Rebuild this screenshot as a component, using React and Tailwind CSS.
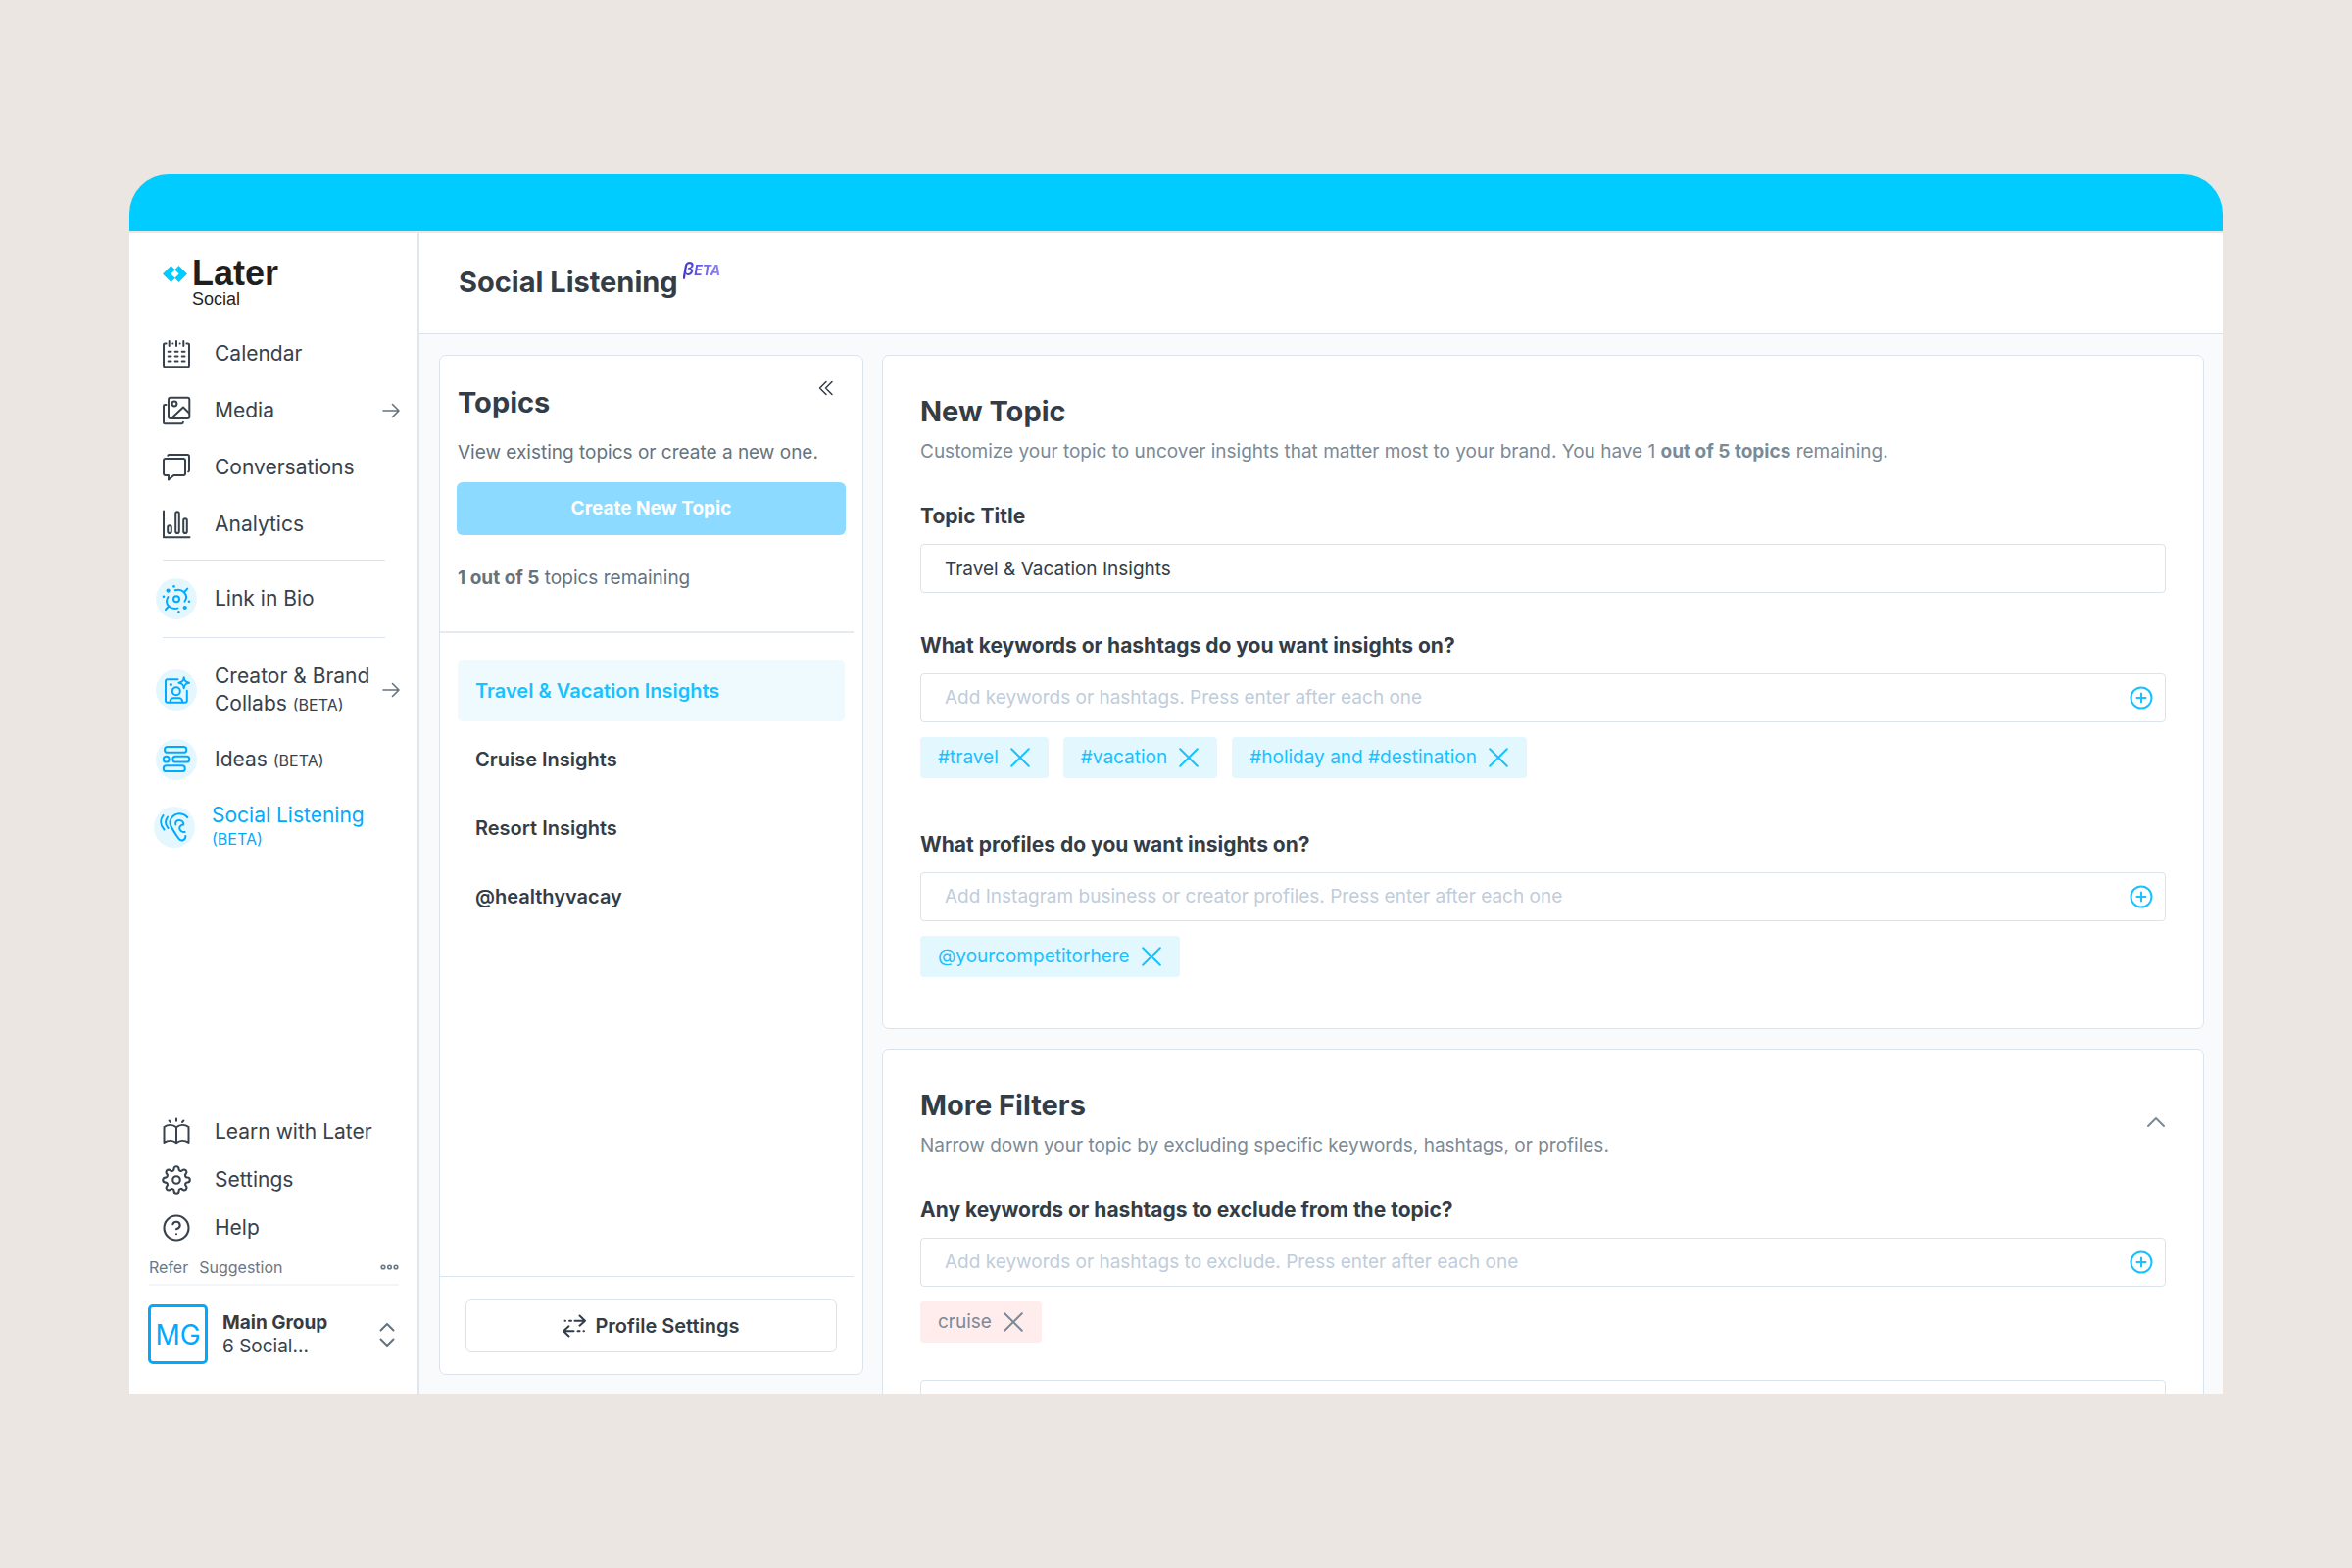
import React, { useState } from "react";
import { FiSettings, FiHelpCircle } from "react-icons/fi";

// All the line icons share the same 30px canvas
const Icon = ({ children }) => (
  <svg
    viewBox="0 0 30 30"
    className="h-[30px] w-[30px] shrink-0"
    fill="none"
    stroke="currentColor"
    strokeWidth="2"
    strokeLinecap="round"
    strokeLinejoin="round"
    aria-hidden="true"
  >
    {children}
  </svg>
);

const CalendarIcon = () => (
  <Icon>
    <path d="M4.6 4.6H3.2A1.2 1.2 0 0 0 2 5.8v21.3a1.2 1.2 0 0 0 1.2 1.2h23.6a1.2 1.2 0 0 0 1.2-1.2V5.8a1.2 1.2 0 0 0-1.2-1.2h-1.4" />
    <path d="M7.7 2v5M15 2v5M22.3 2v5M11.3 4.6h.1M18.6 4.6h.1" />
    <path d="M6.7 12.7h2.8M13.7 12.7h2.8M20.7 12.7h2.8M6.7 17.6h2.8M13.7 17.6h2.8M20.7 17.6h2.8M6.7 22.4h2.8M13.7 22.4h2.8M20.7 22.4h2.8" />
  </Icon>
);

const MediaIcon = () => (
  <Icon>
    <rect x="7" y="1.7" width="21.3" height="21.3" rx="2" />
    <circle cx="13" cy="8" r="2.4" />
    <path d="M10 22.7 22 11.5l6 6" />
    <path d="M4.5 9H3.2A1.2 1.2 0 0 0 2 10.2V27a1.2 1.2 0 0 0 1.2 1.2h17.3a1.4 1.4 0 0 0 1.4-1.4" />
  </Icon>
);

const ConversationsIcon = () => (
  <Icon>
    <path d="M3.7 6h18.6A1.7 1.7 0 0 1 24 7.7v13.6a1.7 1.7 0 0 1-1.7 1.7h-10L7 27.5V23H3.7A1.7 1.7 0 0 1 2 21.3V7.7A1.7 1.7 0 0 1 3.7 6Z" />
    <path d="M6.3 2.8A1.4 1.4 0 0 1 7.6 2h18.9A1.5 1.5 0 0 1 28 3.5V18a1.5 1.5 0 0 1-.8 1.3" />
  </Icon>
);

const AnalyticsIcon = () => (
  <Icon>
    <path d="M2 1.5v26.8h26.5" />
    <rect x="6.2" y="16.2" width="3.6" height="7.8" rx="1.8" />
    <rect x="14.2" y="2.2" width="3.6" height="21.8" rx="1.8" />
    <rect x="22.2" y="9.3" width="3.6" height="14.7" rx="1.8" />
  </Icon>
);

const LinkInBioIcon = () => (
  <Icon>
    <circle cx="15" cy="15.3" r="3" />
    <path d="M13.8 6.2C17.5 5.3 20.5 6 22.8 8.2 25.5 11 25.7 14.5 23.5 17.6M22.8 8.2 26.3 4.6" />
    <path d="M16.5 24.6C12.8 25.5 9.5 24.8 7.2 22.5 4.6 19.8 4.5 16.2 6.5 13M7.2 22.5 3.9 26" />
    <g fill="currentColor" stroke="none">
      <circle cx="6.6" cy="6.6" r="2.1" />
      <circle cx="23.7" cy="24" r="2.1" />
      <circle cx="12.5" cy="2.4" r="1.3" />
      <circle cx="2" cy="12.7" r="1.3" />
      <circle cx="28" cy="17.8" r="1.3" />
      <circle cx="17.4" cy="28.4" r="1.3" />
    </g>
  </Icon>
);

const CreatorIcon = () => (
  <Icon>
    <path d="M16.5 4.3H5.8A1.8 1.8 0 0 0 4 6.1V26a1.8 1.8 0 0 0 1.8 1.8H24a1.8 1.8 0 0 0 1.8-1.8V15.7" />
    <path d="M22.7 2.3C23.2 5.8 24.3 7 28 7.7 24.3 8.4 23.2 9.6 22.7 13.2 22.2 9.6 21.1 8.4 17.4 7.7 21.1 7 22.2 5.8 22.7 2.3Z" />
    <circle cx="14.8" cy="16.3" r="4" />
    <path d="M8.7 27.5v-1a3.2 3.2 0 0 1 3.2-3.2h5.9a3.2 3.2 0 0 1 3.2 3.2v1" />
    <circle cx="9.4" cy="9.4" r="1.5" fill="currentColor" stroke="none" />
  </Icon>
);

const IdeasIcon = () => (
  <Icon>
    <rect x="3" y="2" width="22.3" height="5.8" rx="2.9" />
    <circle cx="4.7" cy="14.7" r="2.9" />
    <rect x="11.3" y="11.8" width="17" height="5.8" rx="2.9" />
    <rect x="1.8" y="21.3" width="22" height="5.8" rx="2.9" />
  </Icon>
);

const ListeningIcon = () => (
  <Icon>
    <path d="M28.3 5C25 1.2 19.5.1 15.2 2.7 11 5.3 9.5 9.7 11.2 13.5 12.5 16.6 16.5 22.5 18.7 25.8 20.3 28.3 22.7 29 24.6 27.8 26 26.9 26.5 25.6 26.3 24" />
    <path d="M16.3 12.5C15.5 9.5 17.7 7.8 20 7.9 22.8 8 24.8 10.2 24.3 12.6 22.3 12.4 20.3 13.9 20.2 16 20.2 18.3 22.5 20.3 25.6 20" />
    <path d="M3.5 3C.3 7.3.4 13 4.5 17.5M8.1 4.5C5.5 8 5.5 12.5 8.6 16" />
  </Icon>
);

const LearnIcon = () => (
  <Icon>
    <path d="M15 10.3C11.5 7.5 6.5 7.2 2.5 10V26C6.5 23.3 11.5 23.5 15 26.2 18.5 23.5 23.5 23.3 27.5 26V10C23.5 7.2 18.5 7.5 15 10.3ZV26" />
    <path d="M15 1.6v2.2M7.6 3.5 9 5M22.4 3.5 21 5" />
  </Icon>
);

const ArrowRight = () => (
  <svg
    viewBox="0 0 18 16"
    className="h-4 w-[18px] shrink-0 text-[#65737e]"
    fill="none"
    stroke="currentColor"
    strokeWidth="1.6"
    strokeLinecap="round"
    strokeLinejoin="round"
    aria-hidden="true"
  >
    <path d="M1 8H17M10.5 1.5 17 8l-6.5 6.5" />
  </svg>
);

const PlusCircle = () => (
  <svg
    viewBox="0 0 24 24"
    className="h-6 w-6"
    fill="none"
    stroke="currentColor"
    strokeWidth="2"
    strokeLinecap="round"
    aria-hidden="true"
  >
    <circle cx="12" cy="12" r="10.5" />
    <path d="M12 7.5v9M7.5 12h9" />
  </svg>
);

const mainLinks = [
  { label: "Calendar", icon: <CalendarIcon /> },
  { label: "Media", icon: <MediaIcon />, arrow: true },
  { label: "Conversations", icon: <ConversationsIcon /> },
  { label: "Analytics", icon: <AnalyticsIcon /> },
];

const footerLinks = [
  { label: "Learn with Later", icon: <LearnIcon /> },
  {
    label: "Settings",
    icon: <FiSettings className="h-[30px] w-[30px]" strokeWidth={1.7} />,
  },
  {
    label: "Help",
    icon: <FiHelpCircle className="h-[30px] w-[30px]" strokeWidth={1.7} />,
  },
];

const topics = [
  "Travel & Vacation Insights",
  "Cruise Insights",
  "Resort Insights",
  "@healthyvacay",
];

const Logo = () => (
  <a href="#home" className="flex items-start gap-[5px] pl-[34px]">
    <svg viewBox="0 0 25 17" className="mt-[9px] h-[17px] w-[25px]" aria-hidden="true">
      <path
        fill="#00ccff"
        fillRule="evenodd"
        d="M8.5 0 12.5 4 16.5 0 25 8.5 16.5 17 12.5 13 8.5 17 0 8.5ZM12.5 4.4 8.4 8.5 12.5 12.6 16.6 8.5Z"
      />
    </svg>
    <span className="flex flex-col font-['Liberation_Sans',Arial,sans-serif] text-[#1f1f1f]">
      <span className="text-[36px] leading-[34px] font-bold">Later</span>
      <span className="text-[18px] leading-[18px]">Social</span>
    </span>
  </a>
);

const NavBubble = ({ children }) => (
  <span className="flex h-[42px] w-[42px] shrink-0 items-center justify-center rounded-full bg-[#e4f7ff] text-[#00aaff]">
    {children}
  </span>
);

const Sidebar = () => (
  <aside className="flex w-[296px] shrink-0 flex-col border-r-2 border-[#e0e6ee] bg-white pt-[24px] text-[21px] text-[#38424c]">
    <Logo />
    <nav className="mt-[18px] flex flex-col">
      {mainLinks.map((link) => (
        <a
          key={link.label}
          href="#nav"
          className="flex h-[58px] items-center gap-[24px] pr-[18px] pl-[33px]"
        >
          {link.icon}
          <span className="flex-1">{link.label}</span>
          {link.arrow && <ArrowRight />}
        </a>
      ))}
      <hr className="mt-[7px] mr-[33px] ml-[34px] border-[#dbe3ef]" />
      <a href="#bio" className="flex h-[78px] items-center gap-[18px] pl-[27px]">
        <NavBubble>
          <LinkInBioIcon />
        </NavBubble>
        Link in Bio
      </a>
      <hr className="mr-[33px] ml-[34px] border-[#dbe3ef]" />
      <a
        href="#collabs"
        className="mt-[25px] flex items-center justify-between pr-[18px] pl-[27px] leading-[28px]"
      >
        <span className="flex items-center gap-[18px]">
          <NavBubble>
            <CreatorIcon />
          </NavBubble>
          <span className="whitespace-nowrap">
            Creator &amp; Brand
            <br />
            Collabs <span className="text-[16px] leading-none">(BETA)</span>
          </span>
        </span>
        <ArrowRight />
      </a>
      <a href="#ideas" className="mt-[22px] flex items-center gap-[18px] pl-[27px]">
        <NavBubble>
          <IdeasIcon />
        </NavBubble>
        <span>
          Ideas <span className="text-[16px] leading-none">(BETA)</span>
        </span>
      </a>
      <a
        href="#listening"
        className="mt-[23px] flex items-center gap-[17px] pl-[25px] leading-[25px] text-[#00aaff]"
      >
        <NavBubble>
          <ListeningIcon />
        </NavBubble>
        <span className="whitespace-nowrap">
          <span className="block">Social Listening</span>
          <span className="block text-[16px]">(BETA)</span>
        </span>
      </a>
    </nav>

    <div className="mt-auto flex flex-col">
      {footerLinks.map((link) => (
        <a
          key={link.label}
          href="#footer"
          className="flex h-[49px] items-center gap-[24px] pl-[33px]"
        >
          {link.icon}
          {link.label}
        </a>
      ))}
      <div className="mr-[19px] ml-[20px] flex items-center gap-[11px] border-b-2 border-[#f3f5f7] pt-[3px] pb-[4px] text-[16px] leading-[26px] text-[#6b7883]">
        <a href="#refer">Refer</a>
        <a href="#suggestion">Suggestion</a>
        <button type="button" aria-label="More options" className="ml-auto">
          <svg
            viewBox="0 0 19 6"
            className="h-[6px] w-[19px]"
            fill="none"
            stroke="currentColor"
            strokeWidth="1.6"
          >
            <circle cx="3" cy="3" r="1.8" />
            <circle cx="9.5" cy="3" r="1.8" />
            <circle cx="16" cy="3" r="1.8" />
          </svg>
        </button>
      </div>
      <button
        type="button"
        className="mt-[19px] mr-[23px] mb-[30px] ml-[19px] flex items-center gap-[15px] text-left"
      >
        <span className="flex h-[61px] w-[61px] shrink-0 items-center justify-center rounded-[5px] border-3 border-[#00aaff] text-[28px] text-[#00aaff]">
          MG
        </span>
        <span className="flex-1 text-[19px] leading-[24px]">
          <span className="block font-bold text-[#333d47]">Main Group</span>
          <span className="block">6 Social...</span>
        </span>
        <svg
          viewBox="0 0 16 26"
          className="h-[26px] w-4 text-[#65737e]"
          fill="none"
          stroke="currentColor"
          strokeWidth="2"
          strokeLinecap="round"
          strokeLinejoin="round"
          aria-hidden="true"
        >
          <path d="M1.5 8.5 8 2l6.5 6.5M1.5 17.5 8 24l6.5-6.5" />
        </svg>
      </button>
    </div>
  </aside>
);

const TopicsPanel = () => {
  const [activeTopic, setActiveTopic] = useState(topics[0]);

  return (
    <section className="flex w-[433px] shrink-0 flex-col rounded-[7px] border border-[#dbe3ec] bg-white">
      <div className="flex items-start justify-between pr-[29px] pl-[18px]">
        <h2 className="pt-[31px] text-[29px] leading-[34px] font-bold">Topics</h2>
        <button type="button" aria-label="Collapse topics" className="pt-[25px]">
          <svg
            viewBox="0 0 16 16"
            className="h-4 w-4"
            fill="none"
            stroke="currentColor"
            strokeWidth="1.5"
            strokeLinecap="round"
            strokeLinejoin="round"
          >
            <path d="M8 1.5 1.5 8 8 14.5M14 1.5 7.5 8 14 14.5" />
          </svg>
        </button>
      </div>
      <p className="mt-[20px] pl-[18px] text-[19px] leading-[28px] text-[#65737e]">
        View existing topics or create a new one.
      </p>
      <button
        type="button"
        className="mx-[17px] mt-[16px] h-[54px] rounded-[6px] bg-[#8cdaff] text-[19px] font-bold text-white"
      >
        Create New Topic
      </button>
      <p className="mt-[30px] pl-[18px] text-[19px] leading-[28px] text-[#65737e]">
        <b className="font-bold">1 out of 5</b> topics remaining
      </p>
      <hr className="mt-[40px] mr-[9px] border-t-2 border-[#e4eaf0]" />
      <ul className="mt-[27px] flex flex-col gap-[7px] px-[18px]">
        {topics.map((topic) => (
          <li key={topic}>
            <button
              type="button"
              onClick={() => setActiveTopic(topic)}
              className={`h-[63px] w-full rounded-[5px] pl-[18px] text-left text-[20px] font-semibold ${
                topic === activeTopic ? "bg-[#effaff] text-[#17c2ff]" : ""
              }`}
            >
              {topic}
            </button>
          </li>
        ))}
      </ul>
      <hr className="mt-auto mr-[9px] border-[#dbe3ec]" />
      <button
        type="button"
        className="mx-[26px] mt-[23px] mb-[22px] flex h-[54px] items-center justify-center gap-[9px] rounded-[6px] border border-[#dbe3ec] text-[20px] font-semibold"
      >
        <svg
          viewBox="0 0 24 24"
          className="h-6 w-6"
          fill="none"
          stroke="currentColor"
          strokeWidth="2"
          strokeLinecap="round"
          strokeLinejoin="round"
          aria-hidden="true"
        >
          <path d="M12.5 6.7H23M17.5 1.5 23 6.7l-5.5 5M7 6.7h2M2.5 6.7h.5" />
          <path d="M11.5 17.3H1M6.500 12.3 1 17.3l5.5 5.2M15.5 17.3h2M21.5 17.3h.5" />
        </svg>
        Profile Settings
      </button>
    </section>
  );
};

const Chip = ({ label, excluded, onRemove }) => (
  <li
    className={`flex h-[42px] items-center gap-[12px] rounded-[4px] pr-[19px] pl-[18px] text-[19px] ${
      excluded ? "bg-[#ffecec] text-[#7c8a96]" : "bg-[#e3f7ff] text-[#17c2ff]"
    }`}
  >
    {label}
    <button type="button" aria-label={`Remove ${label}`} onClick={onRemove}>
      <svg
        viewBox="0 0 20 20"
        className="h-5 w-5"
        fill="none"
        stroke="currentColor"
        strokeWidth="2"
        strokeLinecap="round"
      >
        <path d="M1.2 1.2 18.8 18.8M18.8 1.2 1.2 18.8" />
      </svg>
    </button>
  </li>
);

const TagField = ({ id, label, placeholder, initialTags, excluded }) => {
  const [tags, setTags] = useState(initialTags);
  const [value, setValue] = useState("");

  const addTag = (e) => {
    e.preventDefault();
    if (!value.trim()) return;
    setTags([...tags, value.trim()]);
    setValue("");
  };

  return (
    <form onSubmit={addTag} className="flex flex-col">
      <label htmlFor={id} className="text-[21px] leading-[28px] font-bold">
        {label}
      </label>
      <div className="mt-[14px] flex h-[50px] items-center rounded-[4px] border border-[#dbe3ec] pr-[12px] pl-[24px]">
        <input
          id={id}
          type="text"
          value={value}
          onChange={(e) => setValue(e.target.value)}
          placeholder={placeholder}
          className="min-w-0 flex-1 text-[19px] outline-none placeholder:text-[#bfcddb]"
        />
        <button type="submit" aria-label="Add" className="text-[#17c2ff]">
          <PlusCircle />
        </button>
      </div>
      <ul className="mt-[15px] flex flex-wrap gap-[15px]">
        {tags.map((tag) => (
          <Chip
            key={tag}
            label={tag}
            excluded={excluded}
            onRemove={() => setTags(tags.filter((t) => t !== tag))}
          />
        ))}
      </ul>
    </form>
  );
};

const NewTopicCard = () => (
  <section className="shrink-0 rounded-[7px] border border-[#dbe3ec] bg-white px-[38px] pt-[40px] pb-[52px]">
    <h2 className="text-[29px] leading-[34px] font-bold">New Topic</h2>
    <p className="mt-[10px] text-[19px] leading-[28px] text-[#7c8a96]">
      Customize your topic to uncover insights that matter most to your brand. You have 1{" "}
      <b className="font-bold">out of 5 topics</b> remaining.
    </p>
    <div className="mt-[38px] flex flex-col">
      <label htmlFor="topic-title" className="text-[21px] leading-[28px] font-bold">
        Topic Title
      </label>
      <input
        id="topic-title"
        type="text"
        defaultValue="Travel & Vacation Insights"
        className="mt-[14px] h-[50px] rounded-[4px] border border-[#dbe3ec] px-[24px] text-[19px] outline-none"
      />
    </div>
    <div className="mt-[40px] flex flex-col gap-[54px]">
      <TagField
        id="keywords"
        label="What keywords or hashtags do you want insights on?"
        placeholder="Add keywords or hashtags. Press enter after each one"
        initialTags={["#travel", "#vacation", "#holiday and #destination"]}
      />
      <TagField
        id="profiles"
        label="What profiles do you want insights on?"
        placeholder="Add Instagram business or creator profiles. Press enter after each one"
        initialTags={["@yourcompetitorhere"]}
      />
    </div>
  </section>
);

const MoreFiltersCard = () => (
  <section className="shrink-0 rounded-[7px] border border-[#dbe3ec] bg-white px-[38px] pt-[40px] pb-[52px]">
    <div className="flex items-center justify-between">
      <div>
        <h2 className="text-[29px] leading-[34px] font-bold">More Filters</h2>
        <p className="mt-[10px] text-[19px] leading-[28px] text-[#7c8a96]">
          Narrow down your topic by excluding specific keywords, hashtags, or profiles.
        </p>
      </div>
      <button type="button" aria-label="Collapse filters" className="pb-1 text-[#7c8a96]">
        <svg
          viewBox="0 0 20 12"
          className="h-3 w-5"
          fill="none"
          stroke="currentColor"
          strokeWidth="2"
          strokeLinecap="round"
          strokeLinejoin="round"
        >
          <path d="M2 10 10 2l8 8" />
        </svg>
      </button>
    </div>
    <div className="mt-[38px]">
      <TagField
        id="exclude-keywords"
        label="Any keywords or hashtags to exclude from the topic?"
        placeholder="Add keywords or hashtags to exclude. Press enter after each one"
        initialTags={["cruise"]}
        excluded
      />
    </div>
    <input
      type="text"
      aria-label="Profiles to exclude"
      className="mt-[38px] h-[50px] w-full rounded-[4px] border border-[#dbe3ec] px-[24px] text-[19px] outline-none"
    />
  </section>
);

const App = () => {
  return (
    <div className="flex h-screen flex-col bg-[#ebe6e1] px-[132px] py-[178px] font-[Inter,'Liberation_Sans',sans-serif] text-[#333d47]">
      <div className="h-[58px] shrink-0 rounded-t-[40px] bg-[#00ccff]" />
      <div className="mt-[2px] flex min-h-0 flex-1 overflow-hidden bg-[#f8fafc]">
        <Sidebar />
        <div className="flex min-w-0 flex-1 flex-col">
          <header className="flex shrink-0 items-start border-b border-[#dbe3ec] bg-white pt-[27px] pb-[35px] pl-[40px]">
            <h1 className="pt-[6px] text-[29px] leading-[34px] font-bold">Social Listening</h1>
            <span className="ml-[5px] bg-linear-to-r from-[#4338ca] to-[#9c8cff] bg-clip-text pr-1 text-[14px] leading-[22px] font-bold text-transparent italic">
              <span className="text-[19px] leading-none font-semibold">β</span>ETA
            </span>
          </header>
          <main className="flex min-h-0 flex-1 gap-[19px] pr-[19px] pl-[20px]">
            <div className="flex pt-[21px] pb-[19px]">
              <TopicsPanel />
            </div>
            <div className="flex min-w-0 flex-1 flex-col gap-[20px] overflow-hidden pt-[21px]">
              <NewTopicCard />
              <MoreFiltersCard />
            </div>
          </main>
        </div>
      </div>
    </div>
  );
};

export default App;
